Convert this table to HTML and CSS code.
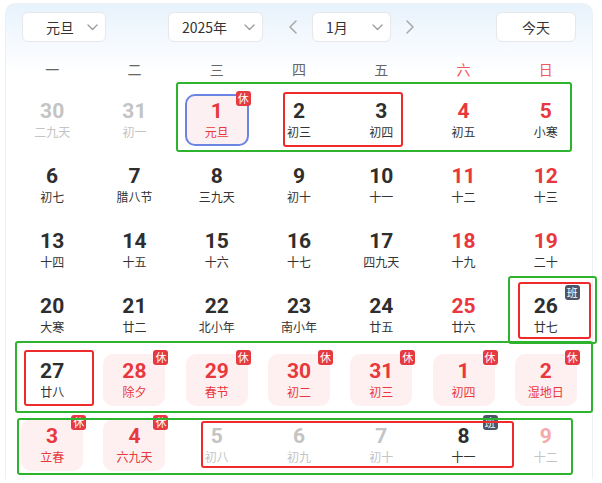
FILE: index.html
```html
<!DOCTYPE html>
<html lang="zh-CN">
<head>
<meta charset="utf-8">
<title>日历</title>
<link rel="stylesheet" href="styles.css">
</head>
<body>
<div class="page">
  <div class="card">
    <div class="toolbar">
      <div class="select sel-holiday"><span>元旦</span><svg class="chev" viewBox="0 0 11 7" width="11" height="7"><path d="M1 1l4.5 4.5L10 1"/></svg></div>
      <div class="select sel-year"><span>2025年</span><svg class="chev" viewBox="0 0 11 7" width="11" height="7"><path d="M1 1l4.5 4.5L10 1"/></svg></div>
      <svg class="arrow arrow-prev" viewBox="0 0 8 14" width="8" height="14"><path d="M7 1L1 7l6 6"/></svg>
      <div class="select sel-month"><span>1月</span><svg class="chev" viewBox="0 0 11 7" width="11" height="7"><path d="M1 1l4.5 4.5L10 1"/></svg></div>
      <svg class="arrow arrow-next" viewBox="0 0 8 14" width="8" height="14"><path d="M1 1l6 6-6 6"/></svg>
      <div class="today-btn">今天</div>
    </div>
    <div class="weekdays">
      <div>一</div><div>二</div><div>三</div><div>四</div><div>五</div><div class="we">六</div><div class="we">日</div>
    </div>
    <div class="grid">
      <!-- row 1 -->
      <div class="cell other"><div class="box"><div class="num">30</div><div class="lunar">二九天</div></div></div>
      <div class="cell other"><div class="box"><div class="num">31</div><div class="lunar">初一</div></div></div>
      <div class="cell holiday selected"><div class="box"><div class="num">1</div><div class="lunar">元旦</div><span class="badge rest">休</span></div></div>
      <div class="cell"><div class="box"><div class="num">2</div><div class="lunar">初三</div></div></div>
      <div class="cell"><div class="box"><div class="num">3</div><div class="lunar">初四</div></div></div>
      <div class="cell weekend"><div class="box"><div class="num">4</div><div class="lunar">初五</div></div></div>
      <div class="cell weekend"><div class="box"><div class="num">5</div><div class="lunar">小寒</div></div></div>
      <!-- row 2 -->
      <div class="cell"><div class="box"><div class="num">6</div><div class="lunar">初七</div></div></div>
      <div class="cell"><div class="box"><div class="num">7</div><div class="lunar">腊八节</div></div></div>
      <div class="cell"><div class="box"><div class="num">8</div><div class="lunar">三九天</div></div></div>
      <div class="cell"><div class="box"><div class="num">9</div><div class="lunar">初十</div></div></div>
      <div class="cell"><div class="box"><div class="num">10</div><div class="lunar">十一</div></div></div>
      <div class="cell weekend"><div class="box"><div class="num">11</div><div class="lunar">十二</div></div></div>
      <div class="cell weekend"><div class="box"><div class="num">12</div><div class="lunar">十三</div></div></div>
      <!-- row 3 -->
      <div class="cell"><div class="box"><div class="num">13</div><div class="lunar">十四</div></div></div>
      <div class="cell"><div class="box"><div class="num">14</div><div class="lunar">十五</div></div></div>
      <div class="cell"><div class="box"><div class="num">15</div><div class="lunar">十六</div></div></div>
      <div class="cell"><div class="box"><div class="num">16</div><div class="lunar">十七</div></div></div>
      <div class="cell"><div class="box"><div class="num">17</div><div class="lunar">四九天</div></div></div>
      <div class="cell weekend"><div class="box"><div class="num">18</div><div class="lunar">十九</div></div></div>
      <div class="cell weekend"><div class="box"><div class="num">19</div><div class="lunar">二十</div></div></div>
      <!-- row 4 -->
      <div class="cell"><div class="box"><div class="num">20</div><div class="lunar">大寒</div></div></div>
      <div class="cell"><div class="box"><div class="num">21</div><div class="lunar">廿二</div></div></div>
      <div class="cell"><div class="box"><div class="num">22</div><div class="lunar">北小年</div></div></div>
      <div class="cell"><div class="box"><div class="num">23</div><div class="lunar">南小年</div></div></div>
      <div class="cell"><div class="box"><div class="num">24</div><div class="lunar">廿五</div></div></div>
      <div class="cell weekend"><div class="box"><div class="num">25</div><div class="lunar">廿六</div></div></div>
      <div class="cell"><div class="box"><div class="num">26</div><div class="lunar">廿七</div><span class="badge work">班</span></div></div>
      <!-- row 5 -->
      <div class="cell"><div class="box"><div class="num">27</div><div class="lunar">廿八</div></div></div>
      <div class="cell holiday"><div class="box"><div class="num">28</div><div class="lunar">除夕</div><span class="badge rest">休</span></div></div>
      <div class="cell holiday"><div class="box"><div class="num">29</div><div class="lunar">春节</div><span class="badge rest">休</span></div></div>
      <div class="cell holiday"><div class="box"><div class="num">30</div><div class="lunar">初二</div><span class="badge rest">休</span></div></div>
      <div class="cell holiday"><div class="box"><div class="num">31</div><div class="lunar">初三</div><span class="badge rest">休</span></div></div>
      <div class="cell holiday"><div class="box"><div class="num">1</div><div class="lunar">初四</div><span class="badge rest">休</span></div></div>
      <div class="cell holiday"><div class="box"><div class="num">2</div><div class="lunar">湿地日</div><span class="badge rest">休</span></div></div>
      <!-- row 6 -->
      <div class="cell holiday"><div class="box"><div class="num">3</div><div class="lunar">立春</div><span class="badge rest">休</span></div></div>
      <div class="cell holiday"><div class="box"><div class="num">4</div><div class="lunar">六九天</div><span class="badge rest">休</span></div></div>
      <div class="cell other"><div class="box"><div class="num">5</div><div class="lunar">初八</div></div></div>
      <div class="cell other"><div class="box"><div class="num">6</div><div class="lunar">初九</div></div></div>
      <div class="cell other"><div class="box"><div class="num">7</div><div class="lunar">初十</div></div></div>
      <div class="cell"><div class="box"><div class="num">8</div><div class="lunar">十一</div><span class="badge work">班</span></div></div>
      <div class="cell other-weekend"><div class="box"><div class="num">9</div><div class="lunar">十二</div></div></div>
    </div>
  </div>

  <div class="mark green" style="left:176px;top:79px;width:396px;height:70px"></div>
  <div class="mark red" style="left:283px;top:89px;width:120px;height:55px"></div>
  <div class="mark green" style="left:508px;top:273px;width:89px;height:68px"></div>
  <div class="mark red" style="left:518px;top:279px;width:73px;height:57px"></div>
  <div class="mark green" style="left:15px;top:338px;width:578px;height:72px"></div>
  <div class="mark red" style="left:24px;top:347px;width:70px;height:56px"></div>
  <div class="mark green" style="left:17px;top:415px;width:556px;height:57px"></div>
  <div class="mark red" style="left:201px;top:418px;width:313px;height:47px"></div>
</div>
</body>
</html>
```

FILE: styles.css
```css
* { box-sizing: border-box; }

html, body {
  margin: 0;
  padding: 0;
  background: #ffffff;
}

body {
  font-family: "Noto Sans CJK SC", "Noto Sans", sans-serif;
  color: #333;
  width: 602px;
  height: 483px;
  overflow: hidden;
}

.page {
  position: relative;
  width: 602px;
  height: 483px;
}

.card {
  margin: 3px 0 0 5px;
  width: 588px;
  height: 476px;
  border: 1px solid #eef0f3;
  border-bottom: none;
  border-radius: 10px 10px 0 0;
  background: linear-gradient(180deg, #e7f2fc 0px, #f4f9fe 35px, #ffffff 70px);
}

/* toolbar */
.toolbar {
  display: flex;
  align-items: center;
  height: 30px;
  margin-top: 8px;
}

.select {
  display: flex;
  align-items: center;
  justify-content: space-between;
  height: 30px;
  background: #fff;
  border: 1px solid #e6e8ec;
  border-radius: 6px;
  font-size: 14px;
  color: #333;
  padding: 0 7px 0 13px;
}

.select span { line-height: 28px; }

.chev path, .arrow path {
  fill: none;
  stroke: #9a9a9a;
  stroke-width: 1.3;
  stroke-linecap: round;
  stroke-linejoin: round;
}

.arrow path { stroke: #a8a8a8; stroke-width: 1.5; }

.sel-holiday { margin-left: 16px; width: 84px; padding-left: 23px; }
.sel-year { margin-left: 62px; width: 95px; }
.arrow-prev { margin-left: 26px; }
.sel-month { margin-left: 15px; width: 79px; }
.arrow-next { margin-left: 15px; }

.today-btn {
  margin-left: 82px;
  width: 80px;
  height: 30px;
  line-height: 28px;
  text-align: center;
  background: #fff;
  border: 1px solid #e6e8ec;
  border-radius: 6px;
  font-size: 14px;
  color: #333;
}

/* weekday header */
.weekdays {
  display: grid;
  grid-template-columns: repeat(7, 1fr);
  margin: 12px 5px 0 5px;
  height: 30px;
  line-height: 30px;
  text-align: center;
  font-size: 14px;
  color: #666;
}

.weekdays .we { color: #f0565a; }

/* grid */
.grid {
  display: grid;
  grid-template-columns: repeat(7, 1fr);
  grid-auto-rows: 65px;
  margin: 3px 5px 0 5px;
}

.cell {
  display: flex;
  align-items: center;
  justify-content: center;
}

.box {
  position: relative;
  width: 62px;
  height: 52px;
  border-radius: 10px;
  display: flex;
  flex-direction: column;
  align-items: center;
  justify-content: center;
}

.num {
  font-family: Roboto, "Liberation Sans", sans-serif;
  font-weight: 700;
  font-size: 21px;
  line-height: 22px;
  color: #2e2e2e;
}

.lunar {
  margin-top: 2px;
  font-size: 12px;
  line-height: 16px;
  color: #333;
}

.weekend .num { color: #e8383d; }

.other .num, .other .lunar { color: #c4c4c4; }
.other-weekend .num { color: #f5a9ab; }
.other-weekend .lunar { color: #c4c4c4; }

.holiday .box { background: #fef0f0; }
.holiday .num, .holiday .lunar { color: #e8383d; }

.selected .box {
  border: 2px solid #6a84e4;
  width: 64px;
  background: #fcf0f3;
}

.badge {
  position: absolute;
  top: -4px;
  right: -3px;
  width: 15px;
  height: 15px;
  border-radius: 3px;
  font-size: 11px;
  line-height: 15px;
  text-align: center;
  color: #fff;
}

.selected .badge { top: -5px; right: -4px; }

.badge.rest { background: #e53a3f; }
.badge.work { background: #4b5567; }

/* annotation overlays */
.mark {
  position: absolute;
  border-radius: 3px;
  pointer-events: none;
}

.mark.green { border: 2px solid #2eb32e; }
.mark.red { border: 2px solid #ee2a2a; }
```
